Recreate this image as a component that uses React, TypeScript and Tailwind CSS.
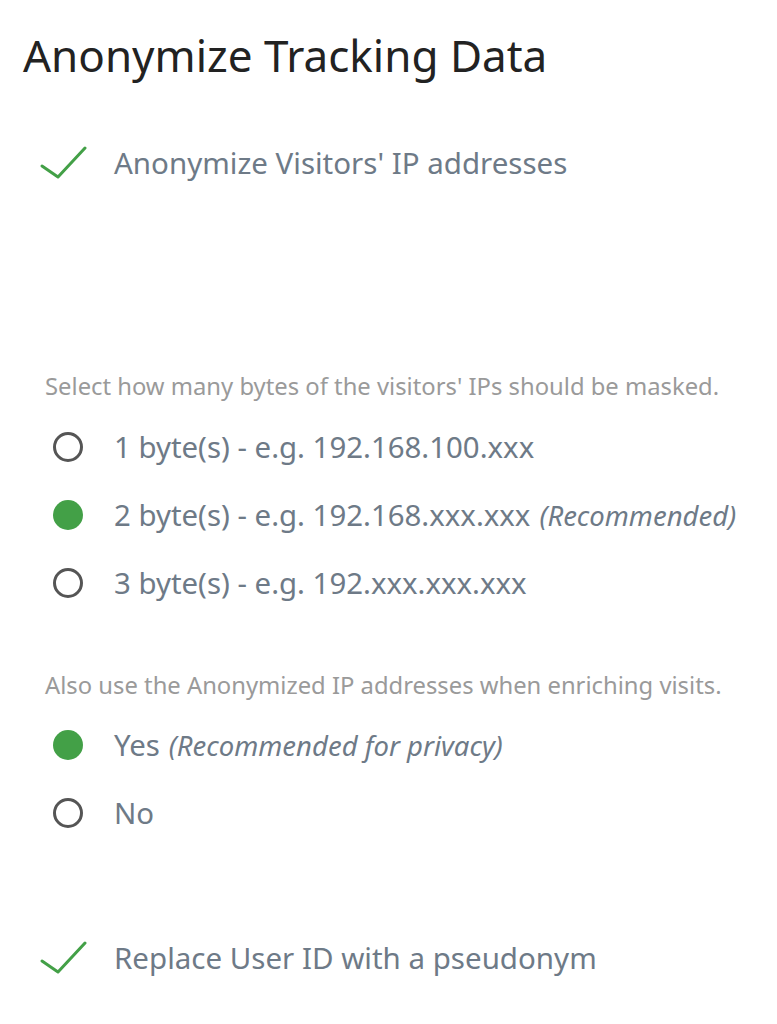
import { useState } from 'react';

const FONT = { fontFamily: '"Noto Sans", "Open Sans", sans-serif' };

function Check() {
  return (
    <svg width="47" height="34" viewBox="0 0 47 34" className="shrink-0">
      <path d="M2 20 L18 31 L45 2" fill="none" stroke="#43a047" strokeWidth="3" strokeLinecap="round" strokeLinejoin="round" />
    </svg>
  );
}

function Radio({ checked }: { checked: boolean }) {
  return checked ? (
    <span className="block h-[30px] w-[30px] shrink-0 rounded-full bg-[#43a047]" />
  ) : (
    <span className="block h-[30px] w-[30px] shrink-0 rounded-full border-[3px] border-[#555555]" />
  );
}

interface Option {
  id: string;
  label: string;
  note?: string;
}

const BYTES: Option[] = [
  { id: '1', label: '1 byte(s) - e.g. 192.168.100.xxx' },
  { id: '2', label: '2 byte(s) - e.g. 192.168.xxx.xxx', note: '(Recommended)' },
  { id: '3', label: '3 byte(s) - e.g. 192.xxx.xxx.xxx' },
];

const ENRICH: Option[] = [
  { id: 'yes', label: 'Yes', note: '(Recommended for privacy)' },
  { id: 'no', label: 'No' },
];

function RadioGroup({ options, value, onChange }: { options: Option[]; value: string; onChange: (v: string) => void }) {
  return (
    <div className="flex flex-col">
      {options.map((o) => (
        <button
          key={o.id}
          className="flex h-[68px] items-center text-left"
          onClick={() => onChange(o.id)}
        >
          <span className="ml-[53px] w-[61px]">
            <Radio checked={value === o.id} />
          </span>
          <span className="text-[29.4px] text-[#6e7a87]">
            {o.label}
            {o.note && <em className="ml-[9px] text-[27.5px]">{o.note}</em>}
          </span>
        </button>
      ))}
    </div>
  );
}

export default function App() {
  const [bytes, setBytes] = useState('2');
  const [enrich, setEnrich] = useState('yes');

  return (
    <div className="min-h-screen bg-white pb-10" style={FONT}>
      <h1 className="pl-[23px] pt-[25px] text-[44px] leading-[60px] text-[#222222]">Anonymize Tracking Data</h1>

      <div className="mt-[48px] flex h-[60px] items-center">
        <span className="ml-[40px] w-[74px]">
          <Check />
        </span>
        <span className="text-[29.5px] text-[#6e7a87]">Anonymize Visitors' IP addresses</span>
      </div>

      <p className="mt-[178px] pl-[45px] text-[23.8px] leading-[30px] text-[#9a9a9a]">
        Select how many bytes of the visitors' IPs should be masked.
      </p>
      <div className="mt-[12px]">
        <RadioGroup options={BYTES} value={bytes} onChange={setBytes} />
      </div>

      <p className="mt-[53px] pl-[45px] text-[23.8px] leading-[30px] text-[#9a9a9a]">
        Also use the Anonymized IP addresses when enriching visits.
      </p>
      <div className="mt-[11px]">
        <RadioGroup options={ENRICH} value={enrich} onChange={setEnrich} />
      </div>

      <div className="mt-[81px] flex h-[60px] items-center">
        <span className="ml-[40px] w-[74px]">
          <Check />
        </span>
        <span className="text-[29.5px] text-[#6e7a87]">Replace User ID with a pseudonym</span>
      </div>
    </div>
  );
}
